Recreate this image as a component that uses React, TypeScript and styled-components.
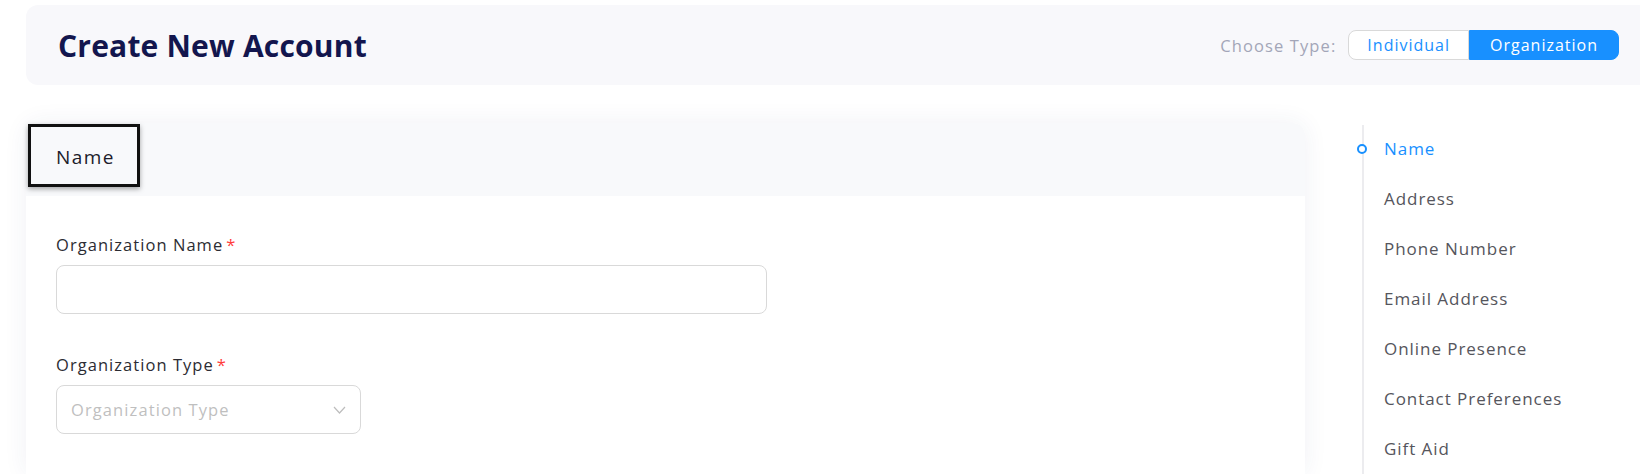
import React, { useState } from "react"
import styled, { createGlobalStyle } from "styled-components"

const GlobalStyle = createGlobalStyle`
  html, body {
    margin: 0;
    padding: 0;
    background: #ffffff;
    font-family: "Open Sans", "Liberation Sans", sans-serif;
    overflow: hidden;
  }
  * { box-sizing: border-box; }
`

const Page = styled.div`
  width: 1640px;
  height: 474px;
  padding: 5px 0 0 26px;
  display: flex;
  flex-direction: column;
  gap: 38px;
`

const HeaderCard = styled.div`
  height: 80px;
  background: #f8f8fb;
  border-radius: 12px 0 0 12px;
  display: flex;
  align-items: center;
  justify-content: space-between;
  padding: 0 21px 0 32px;
`

const Title = styled.h1`
  margin: 0;
  font-size: 30px;
  font-weight: 700;
  color: #13164e;
  letter-spacing: 0.2px;
`

const TypeChooser = styled.div`
  display: flex;
  align-items: center;
  gap: 12px;
`

const ChooserLabel = styled.span`
  font-size: 16.5px;
  letter-spacing: 1.1px;
  color: #a3a6b8;
`

const Toggle = styled.div`
  display: flex;
  height: 30px;
`

const ToggleButton = styled.button<{ $active?: boolean; $side: "left" | "right" }>`
  font-family: inherit;
  font-size: 16px;
  letter-spacing: 1px;
  height: 30px;
  padding: 0 ${p => (p.$side === "left" ? "18px" : "20px")};
  cursor: pointer;
  border: 1px solid ${p => (p.$active ? "#1890ff" : "#d9d9d9")};
  background: ${p => (p.$active ? "#1890ff" : "#ffffff")};
  color: ${p => (p.$active ? "#ffffff" : "#1890ff")};
  border-radius: ${p => (p.$side === "left" ? "8px 0 0 8px" : "0 8px 8px 0")};
`

const MainRow = styled.div`
  display: flex;
  gap: 57px;
  flex: 1;
`

const FormCard = styled.div`
  width: 1279px;
  background: #ffffff;
  border-radius: 12px 12px 0 0;
  box-shadow: 0 0 24px rgba(40, 50, 110, 0.07);
  display: flex;
  flex-direction: column;
`

const CardHeader = styled.div`
  height: 73px;
  background: #f8f9fb;
  border-radius: 12px 12px 0 0;
  display: flex;
  align-items: flex-start;
  padding: 1px 0 0 2px;
`

const SectionTab = styled.div`
  height: 63px;
  padding: 2px 22px 0 25px;
  display: flex;
  align-items: center;
  border: 3px solid #111111;
  box-shadow: 0 2px 5px rgba(0, 0, 0, 0.35);
  font-size: 19px;
  letter-spacing: 1.4px;
  color: #1c1c2a;
`

const FormBody = styled.div`
  padding: 38px 30px 0;
  display: flex;
  flex-direction: column;
  gap: 40px;
`

const Field = styled.div`
  display: flex;
  flex-direction: column;
  gap: 9px;
`

const Label = styled.label`
  font-size: 16.5px;
  letter-spacing: 1.05px;
  color: #2c2c33;
  line-height: 22px;
`

const Required = styled.span`
  color: #ff3b3b;
  margin-left: 3px;
`

const TextInput = styled.input`
  width: 711px;
  height: 49px;
  border: 1px solid #d9d9d9;
  border-radius: 8px;
  outline: none;
  padding: 0 14px;
  font-family: inherit;
  font-size: 16px;
`

const SelectBox = styled.div`
  width: 305px;
  height: 49px;
  border: 1px solid #d9d9d9;
  border-radius: 8px;
  display: flex;
  align-items: center;
  justify-content: space-between;
  padding: 0 14px 0 14px;
  font-size: 16.5px;
  letter-spacing: 1.1px;
  color: #bfbfbf;
`

const StepNav = styled.nav`
  position: relative;
  margin-top: 2px;
  border-left: 2px solid #ececef;
  padding: 13px 0 0 20px;
  display: flex;
  flex-direction: column;
  gap: 28px;
`

const StepItem = styled.div<{ $active?: boolean }>`
  position: relative;
  font-size: 17px;
  letter-spacing: 0.95px;
  line-height: 22px;
  color: ${p => (p.$active ? "#1890ff" : "#55555c")};
`

const StepDot = styled.span`
  position: absolute;
  left: -27px;
  top: 6px;
  width: 10px;
  height: 10px;
  border-radius: 50%;
  border: 2.5px solid #1890ff;
  background: #ffffff;
`

const Chevron = () => (
  <svg width="13" height="8" viewBox="0 0 13 8" fill="none">
    <path d="M1 1l5.5 6L12 1" stroke="#bdbdbd" strokeWidth="1.2" />
  </svg>
)

const steps = [
  "Name",
  "Address",
  "Phone Number",
  "Email Address",
  "Online Presence",
  "Contact Preferences",
  "Gift Aid",
]

export default function App() {
  const [type, setType] = useState("organization")
  return (
    <>
      <GlobalStyle />
      <Page>
        <HeaderCard>
          <Title>Create New Account</Title>
          <TypeChooser>
            <ChooserLabel>Choose Type:</ChooserLabel>
            <Toggle>
              <ToggleButton $side="left" $active={type === "individual"} onClick={() => setType("individual")}>
                Individual
              </ToggleButton>
              <ToggleButton $side="right" $active={type === "organization"} onClick={() => setType("organization")}>
                Organization
              </ToggleButton>
            </Toggle>
          </TypeChooser>
        </HeaderCard>

        <MainRow>
          <FormCard>
            <CardHeader>
              <SectionTab>Name</SectionTab>
            </CardHeader>
            <FormBody>
              <Field>
                <Label>
                  Organization Name<Required>*</Required>
                </Label>
                <TextInput />
              </Field>
              <Field>
                <Label>
                  Organization Type<Required>*</Required>
                </Label>
                <SelectBox>
                  <span>Organization Type</span>
                  <Chevron />
                </SelectBox>
              </Field>
            </FormBody>
          </FormCard>

          <StepNav>
            {steps.map((s, i) => (
              <StepItem key={s} $active={i === 0}>
                {i === 0 && <StepDot />}
                {s}
              </StepItem>
            ))}
          </StepNav>
        </MainRow>
      </Page>
    </>
  )
}
